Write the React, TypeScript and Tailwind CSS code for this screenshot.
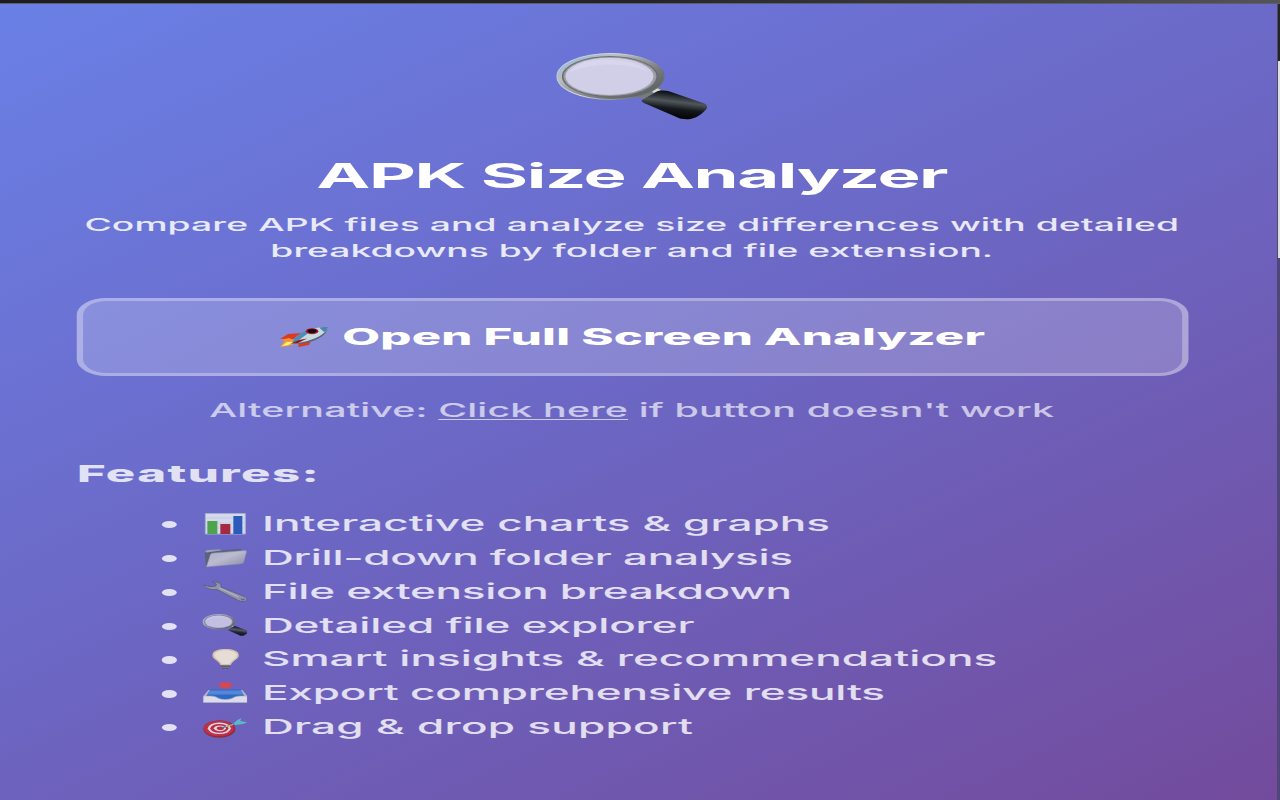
import type { ReactNode } from 'react';

function Magnifier({ className, id }: { className: string; id: string }) {
  return (
    <svg className={className} viewBox="0 0 152 67" preserveAspectRatio="none" aria-hidden="true">
      <defs>
        <linearGradient id={`${id}-rim`} x1="0" y1="0" x2="1" y2="1">
          <stop offset="0" stopColor="#8fb8dc" />
          <stop offset="0.3" stopColor="#b9bec0" />
          <stop offset="0.65" stopColor="#777b7c" />
          <stop offset="1" stopColor="#4d5254" />
        </linearGradient>
        <linearGradient id={`${id}-edge`} x1="0" y1="0" x2="1" y2="0.4">
          <stop offset="0" stopColor="#a9cbe6" />
          <stop offset="0.5" stopColor="#d5d9dc" />
          <stop offset="1" stopColor="#6d6f74" />
        </linearGradient>
        <linearGradient id={`${id}-grip`} x1="0.62" y1="0.1" x2="0.4" y2="0.95">
          <stop offset="0" stopColor="#0c1014" />
          <stop offset="0.35" stopColor="#50575c" />
          <stop offset="0.62" stopColor="#15191c" />
          <stop offset="1" stopColor="#000" />
        </linearGradient>
      </defs>
      <path d="M76 43L98 31L107 37L90 46Z" fill="#777c7c" />
      <path d="M95 38L101 35L105 37L98 40Z" fill="#d8dadb" />
      <ellipse cx="54.5" cy="23.5" rx="53.5" ry="23" fill={`url(#${id}-rim)`} stroke={`url(#${id}-edge)`} strokeWidth="1" />
      <ellipse cx="54" cy="23.5" rx="48" ry="20.6" fill="#6a6e70" />
      <ellipse cx="54" cy="23.5" rx="46.5" ry="19.5" fill="#9c9ea6" />
      <ellipse cx="53.5" cy="23.3" rx="44" ry="18.6" fill="#d1cfe8" />
      <path d="M14 19C21 8 42 5 62 7C78 9 88 14 92 19C75 10 42 8 14 19Z" fill="#d8d6ed" />
      <path d="M86 47L101 38.5C104 37.3 109 37.3 113 38.3L147 50C153 52 152 55 148 58.5C142 64.5 134 68 124 65.5L88 50Q84.5 48.3 86 47Z" fill={`url(#${id}-grip)`} />
    </svg>
  );
}

function Rocket() {
  return (
    <svg className="h-[22px] w-[23.5px] shrink-0" viewBox="0 0 50 22" preserveAspectRatio="none" aria-hidden="true">
      <path d="M1 13L9 8L23 7L17 13L8 13Z" fill="#dc3a20" />
      <path d="M1 14L10 12L14 14L8 15Z" fill="#f59434" />
      <path d="M1 21L6 15L14 14L18 17L9 20Z" fill="#f9a22b" />
      <path d="M3 20L8 16L14 16L9 19Z" fill="#fff27a" />
      <path d="M19 21L20 16L32 14L30 19Z" fill="#e03822" />
      <path d="M13 16.5C16 9 29 1.5 49 .7C48 9 35 15.5 19 17.5Z" fill="#c8d9df" />
      <path d="M13 16.5C17 9 25 4 36 2L28 8L16 17Z" fill="#4e8db8" />
      <path d="M18 17.3C31 15 43 11 48.5 3C47 10 35 16.5 20 18Z" fill="#586671" />
      <path d="M40 1.6C43 1 46 .7 49 .7C49 3 47 5 45 6Z" fill="#4985b1" />
      <path d="M12 17.5L20 14L28 12.5L18 17.5Z" fill="#8e1717" />
      <ellipse cx="33" cy="5.2" rx="6.3" ry="3" fill="#a91d20" />
      <ellipse cx="33" cy="5" rx="4.6" ry="2.1" fill="#140b12" />
    </svg>
  );
}

function Icon({ children }: { children: ReactNode }) {
  return (
    <svg className="h-[22px] w-[21.6px] shrink-0" viewBox="0 0 46 22" preserveAspectRatio="none" aria-hidden="true">
      {children}
    </svg>
  );
}

const chart = (
  <Icon>
    <path d="M3 .5H43V21H3Z" fill="#e8edf4" stroke="#aebbd5" />
    <path d="M4 5H43M4 10H43M4 15H43" stroke="#cad5e3" strokeWidth=".6" />
    <path d="M5 8H15V21H5Z" fill="#4cae38" />
    <path d="M18 11H28V21H18Z" fill="#b0202a" />
    <path d="M31 3H40V21H31Z" fill="#2159b8" />
  </Icon>
);

const folder = (
  <Icon>
    <defs>
      <linearGradient id="folder-face" x1="0" y1="0" x2="1" y2="1">
        <stop stopColor="#b9bcc6" />
        <stop offset="0.45" stopColor="#c9cbd4" />
        <stop offset="1" stopColor="#8e909d" />
      </linearGradient>
    </defs>
    <path d="M2.5 4.5L5 3L17 2.2L20 3.2L38 2L40 4L6 20L3.5 19.6Z" fill="#59616f" />
    <path d="M2.5 4.5L5 3L17 2.2L20 3.2L4 5.4Z" fill="#a4abb8" />
    <path d="M8 7.6Q8.4 6.3 11 6.1L42 3.6Q44.6 3.5 44.2 4.8L41.5 15Q41 16.8 37.5 17L4 20Z" fill="url(#folder-face)" stroke="#8b8f9e" strokeWidth=".5" />
  </Icon>
);

const wrench = (
  <Icon>
    <path d="M10 1C16 .4 20 3 18.5 6L42 15.6C46 17.5 45 20.6 41 20.6Q38.5 20.7 36 19.5L14 8.3C9 9.3 3 7.5 1.5 4L8 5.7L13.5 5L14 3Z" fill="#9a9da8" stroke="#5b5f72" strokeWidth=".9" />
    <path d="M17 7L36 15.8" stroke="#c6c9d1" strokeWidth="1" />
    <ellipse cx="40.5" cy="18.5" rx="2.2" ry=".9" fill="#6e62ae" />
  </Icon>
);

const bulb = (
  <Icon>
    <path d="M18 15L19 19L23 21.5L27 19L28 15Z" fill="#909295" />
    <path d="M18.5 18.2H27.5M20 20.2H26" stroke="#41434d" />
    <path d="M10 7.2C10 2.7 16 1 23 1S36.5 2.7 36.5 7.2C36.5 11.5 30 12.5 28.5 17H18C16.5 12.5 10 11.5 10 7.2Z" fill="#e6d3a6" />
    <path d="M12 7.2C12 3.7 17 2.2 23 2.2S34.5 3.7 34.5 7.2C34 11 28.5 12.5 27 16H19.5C18 12.5 12.5 11 12 7.2Z" fill="#fdf3dc" />
  </Icon>
);

const tray = (
  <Icon>
    <path d="M1 14L6 8H40L45 14V20.5H1Z" fill="#bec4d1" />
    <path d="M4 14L8 7.5H38L42 14L30 18H16Z" fill="#266bc5" />
    <path d="M7 8.5H39L41 12.5H5Z" fill="#4d90dd" />
    <path d="M1 14H8C15 14 15 17.5 23 17.5S31 14 38 14H45V20.5H1Z" fill="#f1f1f2" stroke="#aeb2bf" strokeWidth=".6" />
    <path d="M18 .3H28V3H32L23 7.3L14 3H18Z" fill="#e8443e" />
  </Icon>
);

const target = (
  <Icon>
    <ellipse cx="17" cy="13" rx="16" ry="8.7" fill="#9d1f29" />
    <ellipse cx="16.5" cy="12.5" rx="15" ry="7.8" fill="#cc2a33" />
    <ellipse cx="17" cy="12.3" rx="11.5" ry="5.8" fill="#f4e8eb" />
    <ellipse cx="17" cy="12.3" rx="9" ry="4.4" fill="#c52630" />
    <ellipse cx="17.5" cy="12.3" rx="6" ry="2.9" fill="#f4e8eb" />
    <ellipse cx="18" cy="12.3" rx="3.6" ry="1.8" fill="#c52630" />
    <path d="M19 12L36 7" stroke="#337e89" strokeWidth="1.2" />
    <path d="M23 10.9L31 8.4" stroke="#e5c864" strokeWidth="1" />
    <path d="M31 7.5L35 4L39 2.2L38 5L45 6.2L41 8L33 9Z" fill="#59c8cb" />
  </Icon>
);

const features = [
  { icon: chart, label: 'Interactive charts & graphs', tracking: 'tracking-[0.03px]' },
  { icon: folder, label: 'Drill-down folder analysis', tracking: 'tracking-[-0.13px]' },
  { icon: wrench, label: 'File extension breakdown', tracking: 'tracking-[-0.15px]' },
  { icon: <Magnifier id="list-lens" className="h-[22px] w-[21.6px] shrink-0" />, label: 'Detailed file explorer', tracking: 'tracking-[-0.06px]' },
  { icon: bulb, label: 'Smart insights & recommendations', tracking: 'tracking-[0.02px]' },
  { icon: tray, label: 'Export comprehensive results', tracking: 'tracking-[-0.09px]' },
  { icon: target, label: 'Drag & drop support', tracking: 'tracking-[0.12px]' },
];

function Popup() {
  return (
    <main className="flex h-[796px] w-[599.5px] origin-top-left scale-x-[2.13] flex-col bg-linear-[135deg,#6a80e6_0%,#6c66c3_50%,#734b9c_100%] pr-[41.9px] pl-[35.6px] font-['Inter',sans-serif] text-white">
      <div className="flex justify-center pt-[49px]">
        <Magnifier id="hero-lens" className="h-[67px] w-[71.4px]" />
      </div>
      <h1 className="mt-[36px] text-center text-[34px] leading-[40px] font-bold tracking-[-0.68px] whitespace-nowrap">APK Size Analyzer</h1>
      <p className="mt-[16px] text-center text-[17.5px] leading-[26px] font-[450] whitespace-nowrap text-white/85">
        <span className="tracking-[0.04px]">Compare APK files and analyze size differences with detailed</span>
        <br />
        <span className="tracking-[0px]">breakdowns by folder and file extension.</span>
      </p>
      <button className="mt-[34px] flex h-[77.5px] shrink-0 items-center justify-center gap-[6.5px] rounded-[14px/17px] border-[3px] border-white/30 bg-white/20 text-[23px] font-extrabold tracking-[0.09px] whitespace-nowrap">
        <Rocket />
        <span>Open Full Screen Analyzer</span>
      </button>
      <p className="mt-[21.5px] text-center text-[18.5px] leading-[26px] font-[450] tracking-[0.06px] whitespace-nowrap text-white/65">
        Alternative: <a href="#" className="underline decoration-[1px] underline-offset-[2px]">Click here</a> if button doesn't work
      </p>
      <section className="mt-[35px] text-white/80">
        <h2 className="pl-[0.5px] text-[23px] leading-[32px] font-extrabold tracking-[0.7px]">Features:</h2>
        <ul className="mt-[17px]">
          {features.map(({ icon, label, tracking }) => (
            <li key={label} className="flex h-[33.85px] items-center pl-[40.6px] text-[20.7px] leading-[33.85px] font-[450]">
              <span className="mt-[1.5px] h-[7.4px] w-[7px] rounded-full bg-white/80" />
              <span className="ml-[11.7px] flex opacity-85">{icon}</span>
              <span className={`ml-[6.5px] whitespace-nowrap ${tracking}`}>{label}</span>
            </li>
          ))}
        </ul>
      </section>
    </main>
  );
}

export default function App() {
  return (
    <div className="flex h-[800px] w-[1280px] flex-col overflow-hidden bg-[#48456d]">
      <div className="h-[4px] shrink-0 border-b border-[#5b5c78] bg-linear-to-r from-[#1d1d1f] via-[#252525] to-[#555]" />
      <div className="flex h-[796px]">
        <div className="w-[1277px] shrink-0 overflow-hidden">
          <Popup />
        </div>
        <div className="flex w-[3px] flex-col border-l border-[#4c4b6c]">
          <div className="h-[57px] bg-[#242424]" />
          <div className="h-[197px] bg-[#dedede]" />
          <div className="flex-1 bg-[#51457d]" />
        </div>
      </div>
    </div>
  );
}
